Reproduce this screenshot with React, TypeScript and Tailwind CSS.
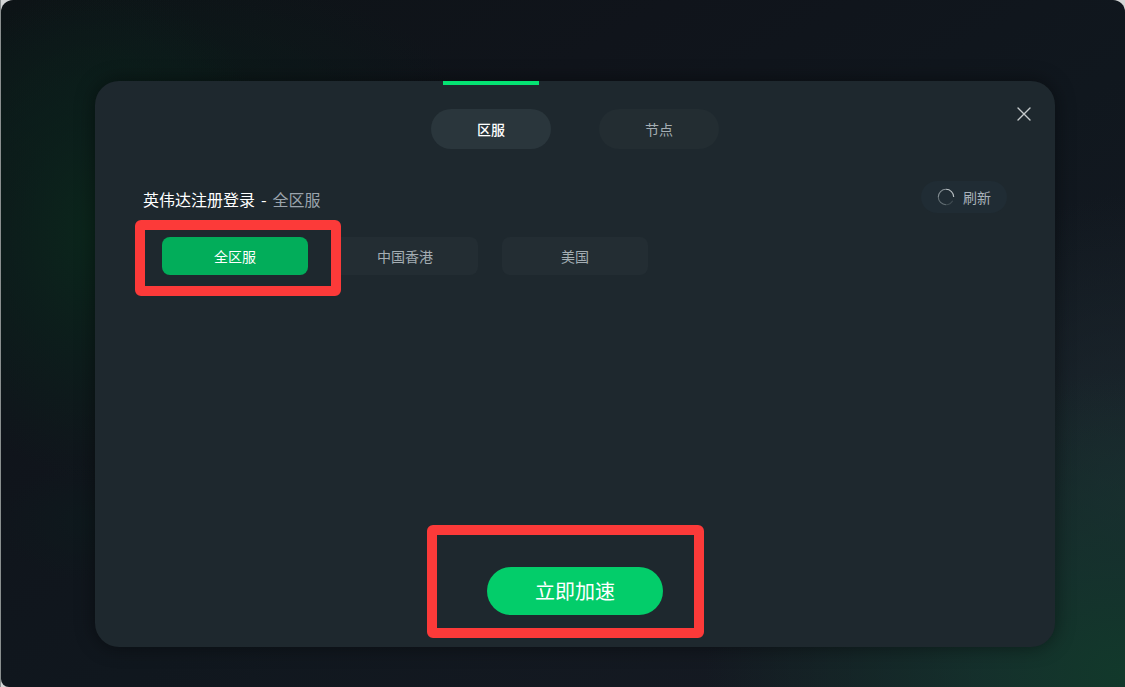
import { useState } from "react";
import type { ReactNode } from "react";
import clsx from "clsx";

const tabs = ["区服", "节点"];
const regions = ["全区服", "中国香港", "美国"];

function Spinner() {
  return (
    <svg className="size-[18px]" viewBox="0 0 18 18" fill="none" strokeWidth="1.1" aria-hidden="true">
      <path d="M9 1.3A7.7 7.7 0 0 1 16.7 9" stroke="#b9c0c4" />
      <path d="M9 1.3A7.7 7.7 0 0 0 1.3 9" stroke="#838d92" />
      <path d="M1.3 9A7.7 7.7 0 0 0 9 16.7" stroke="#647075" />
      <path d="M9 16.7A7.7 7.7 0 0 0 15.7 12.8" stroke="#414d53" />
    </svg>
  );
}

function CloseIcon() {
  return (
    <svg className="size-4" viewBox="0 0 16 16" fill="none" stroke="#c6cbcc" strokeWidth="1.4" aria-hidden="true">
      <path d="M2 2l12 12M14 2L2 14" strokeLinecap="round" />
    </svg>
  );
}

// Red callout drawn over its child
function Highlight({ inset, children }: { inset: string; children: ReactNode }) {
  return (
    <div className="relative">
      {children}
      <div className={clsx("absolute z-10 pointer-events-none rounded-md border-10 border-[#fc3a39]", inset)} />
    </div>
  );
}

export default function App() {
  const [tab, setTab] = useState(tabs[0]);
  const [region, setRegion] = useState(regions[0]);

  const regionButton = (name: string) => (
    <button
      key={name}
      type="button"
      onClick={() => setRegion(name)}
      className={clsx(
        "h-[38px] w-[146px] rounded-lg pb-px text-sm",
        region === name ? "bg-[#02ad5a] text-white" : "bg-[#232d33] text-[#a4adb3]"
      )}
    >
      {name}
    </button>
  );

  return (
    <div className="min-h-screen flex bg-[linear-gradient(to_right,#8a8f8f_1px,#d4d6d6_1px)] pl-px font-['Noto_Sans_CJK_SC',sans-serif]">
      <main className="flex flex-1 rounded-t-xl rounded-bl-lg bg-[radial-gradient(ellipse_190px_250px_at_9%_34%,#0b271c_0%,#0b221cb0_45%,#0b221c00_100%),radial-gradient(ellipse_300px_120px_at_14%_14%,#0b1a19_0%,#0b1a1900_100%),radial-gradient(ellipse_90px_60px_at_8%_76%,#0e191d_0%,#0e191d00_100%),radial-gradient(ellipse_420px_300px_at_100%_98%,#12392b_0%,#14342dd0_35%,#16282900_100%),radial-gradient(ellipse_240px_300px_at_100%_72%,#1c292f_0%,#1a202800_100%),linear-gradient(to_bottom_right,#0d1316_0%,#10141b_30%,#10171e_55%,#171b24_100%)] pl-[94px] pr-[70px] pt-[81px] pb-10">
        <section className="relative mx-auto flex w-full flex-col rounded-3xl bg-[#1e282e] px-12 pb-8 shadow-[0_0_20px_rgba(0,0,0,0.45)]">
          {/* Tabs */}
          <nav className="flex justify-center gap-12">
            {tabs.map((name) => (
              <div key={name} className="flex flex-col items-center gap-6">
                <div className={clsx("h-1 w-24", tab === name && "bg-[#05e373]")} />
                <button
                  type="button"
                  onClick={() => setTab(name)}
                  className={clsx(
                    "h-10 w-[120px] rounded-full pb-px text-sm",
                    tab === name ? "bg-[#2a363c] font-medium text-white" : "bg-[#232d32] text-[#a4adb3]"
                  )}
                >
                  {name}
                </button>
              </div>
            ))}
          </nav>
          <button type="button" aria-label="关闭" className="absolute right-[23px] top-[25px]">
            <CloseIcon />
          </button>

          {/* Current game and region */}
          <header className="mt-8 flex items-start justify-between">
            <h1 className="flex gap-1.5 pt-1.5 text-base text-white">
              <span>英伟达注册登录</span>
              <span>-</span>
              <span className="text-[#9ba4ac]">{region}</span>
            </h1>
            <button
              type="button"
              className="flex h-8 items-center gap-2 rounded-full bg-[#202c34] px-4 text-sm text-[#a9b2ba]"
            >
              <Spinner />
              刷新
            </button>
          </header>

          <div className="mt-6 flex gap-6 pl-[19px]">
            <Highlight inset="-left-[27px] -right-[33px] -top-[17px] -bottom-[21px]">
              {regionButton(regions[0])}
            </Highlight>
            {regions.slice(1).map(regionButton)}
          </div>

          <div className="mt-auto flex justify-center pt-12">
            <Highlight inset="-left-[60px] -right-[41px] -top-[42px] -bottom-[23px]">
              <button type="button" className="h-12 w-44 rounded-full bg-[#03cd6a] text-xl text-white">
                立即加速
              </button>
            </Highlight>
          </div>
        </section>
      </main>
    </div>
  );
}
